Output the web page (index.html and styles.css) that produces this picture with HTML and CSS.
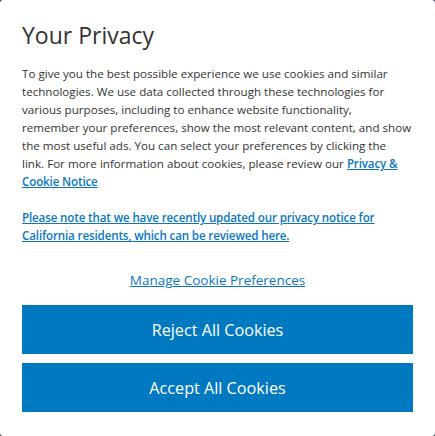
FILE: index.html
```html
<!DOCTYPE html>
<html lang="en">
<head>
<meta charset="utf-8">
<title>Your Privacy</title>
<link rel="stylesheet" href="styles.css">
</head>
<body>
<div class="modal">
  <h1 class="title">Your Privacy</h1>
  <p class="text">To give you the best possible experience we use cookies and similar<br>technologies. We use data collected through these technologies for<br>various purposes, including to enhance website functionality,<br>remember your preferences, show the most relevant content, and show<br>the most useful ads. You can select your preferences by clicking the<br>link. For more information about cookies, please review our <a class="link" href="#">Privacy &amp;<br>Cookie Notice</a></p>
  <p class="text"><a class="link" href="#">Please note that we have recently updated our privacy notice for<br>California residents, which can be reviewed here.</a></p>
  <div class="manage"><a class="manage-link" href="#">Manage Cookie Preferences</a></div>
  <div class="actions">
    <button class="btn">Reject All Cookies</button>
    <button class="btn">Accept All Cookies</button>
  </div>
</div>
</body>
</html>
```
FILE: styles.css
```css
html,body{margin:0;height:100%;}
body{background:#1d2a38;}
.modal{
  background:#fff;
  border-radius:3px;
  height:100%;
  box-sizing:border-box;
  padding:20px 22px 0 22px;
  font-family:"Open Sans",sans-serif;
  color:#333;
}
.title{
  margin:0;
  font-weight:400;
  font-size:23px;
  line-height:30px;
  color:#333;
}
.text{
  margin:15px 0 0 0;
  font-size:11.62px;
  line-height:18px;
  white-space:nowrap;
}
.text + .text{margin-top:18px;}
.link{color:#0a77c0;font-weight:600;letter-spacing:-0.15px;text-decoration:underline;}
.manage{
  margin-top:25px;
  text-align:center;
  font-size:13.5px;
  line-height:20px;
}
.manage-link{color:#0a77c0;text-decoration:underline;}
.actions{
  margin-top:15px;
  display:flex;
  flex-direction:column;
  gap:9px;
}
.btn{
  height:49px;
  border:0;
  background:#0079c1;
  color:#fff;
  font-family:"Open Sans",sans-serif;
  font-size:16.2px;
  padding:0;
}
```
